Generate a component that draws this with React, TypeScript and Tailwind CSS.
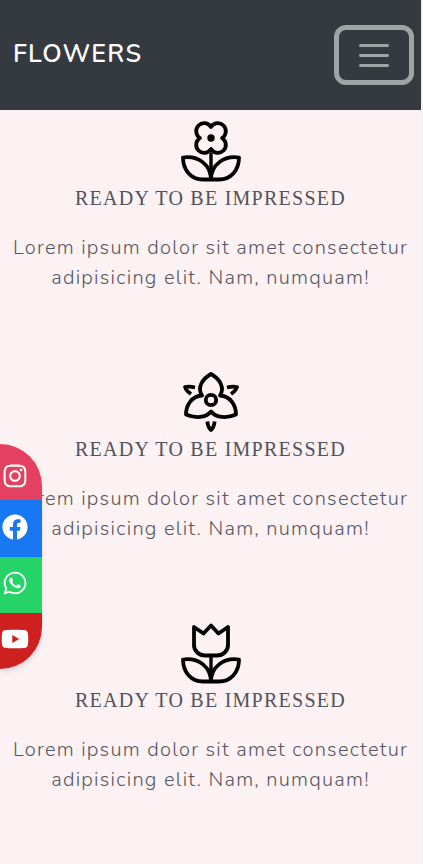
import type { ReactNode } from "react";
import { FaFacebook, FaInstagram, FaWhatsapp, FaYoutube } from "react-icons/fa";

function FlowerSvg({ children }: { children: ReactNode }) {
  return (
    <svg
      className="h-16 w-16"
      viewBox="0 0 64 64"
      fill="none"
      stroke="#000"
      strokeWidth="3.8"
      strokeLinecap="round"
      strokeLinejoin="round"
      aria-hidden="true"
    >
      {children}
    </svg>
  );
}

function Leaves() {
  return (
    <>
      <path d="M32 34V58" strokeWidth="3.4" />
      <path d="M32 59.500C32 45 19 35 4 37.500C4 50 12 59.500 24 59.500H40C52 59.500 60 50 60 37.500C45 35 32 45 32 59.500Z" />
      <path d="M30 49H34L33 58H31Z" fill="#000" strokeWidth="1" />
    </>
  );
}

function Blossom() {
  return (
    <FlowerSvg>
      <path d="M32 7A8 8 0 1 1 43 18A8 8 0 1 1 32 29A8 8 0 1 1 21 18A8 8 0 1 1 32 7Z" />
      <circle cx="32" cy="18" r="3.7" fill="#000" stroke="none" />
      <Leaves />
    </FlowerSvg>
  );
}

function Orchid() {
  return (
    <FlowerSvg>
      <path d="M23 24.500C18 17 23 8 32 3C41 8 46 17 41 24.500C51 25 57 34 57 43.500C48 47.500 37 47 32 40.500C27 47 16 47.500 7 43.500C7 34 13 25 23 24.500Z" />
      <circle cx="32" cy="29" r="5.200" />
      <path d="M16 16.500C12 15.500 9 15.500 6 16C7 19 9 21 12 23" strokeLinecap="butt" />
      <path d="M48 16.500C52 15.500 55 15.500 58 16C57 19 55 21 52 23" strokeLinecap="butt" />
      <path d="M28.300 50.500C29 55 30 57.500 32 59C34 57.500 35 55 35.700 50.500" strokeLinecap="butt" />
    </FlowerSvg>
  );
}

function Tulip() {
  return (
    <FlowerSvg>
      <path d="M15 5L24.500 11.500L32 3.500L39.500 11.500L49 5V23C49 29 44 33.500 38 33.500H26C20 33.500 15 29 15 23Z" />
      <Leaves />
    </FlowerSvg>
  );
}

function Feature({ icon }: { icon: ReactNode }) {
  return (
    <article className="flex flex-col items-center pb-[78px] text-center">
      {icon}
      <h2 className="font-['Liberation_Serif',serif] text-xl leading-7 tracking-[0.0625em] text-[#50535a]">
        READY TO BE IMPRESSED
      </h2>
      <p className="mt-[21px] text-xl leading-[30px] font-light tracking-[0.0625em] text-[#55585f]">
        Lorem ipsum dolor sit amet consectetur adipisicing elit. Nam, numquam!
      </p>
    </article>
  );
}

export default function App() {
  return (
    <div className="min-h-screen border-r-2 border-[#f1f1f4] bg-[#fcf1f3] font-[Nunito,'Open_Sans',sans-serif]">
      <header className="flex h-[110px] items-center justify-between bg-[#353a41] pr-[7px] pl-[13px]">
        <a
          href="#"
          className="pb-0.5 text-[25px] leading-8 font-semibold tracking-wider text-white"
        >
          FLOWERS
        </a>
        <button
          type="button"
          aria-label="Toggle navigation"
          className="flex h-[60px] w-20 flex-col items-center justify-center gap-[7px] rounded-xl border-5 border-[#a1a4a7]"
        >
          <span className="h-[3px] w-[30px] rounded-full bg-[#a1a4a7]" />
          <span className="h-[3px] w-[30px] rounded-full bg-[#a1a4a7]" />
          <span className="h-[3px] w-[30px] rounded-full bg-[#a1a4a7]" />
        </button>
      </header>

      <main className="pt-2.5 pr-2 pl-2">
        <Feature icon={<Blossom />} />
        <Feature icon={<Orchid />} />
        <Feature icon={<Tulip />} />
      </main>

      <nav
        aria-label="Social media"
        className="fixed top-[444px] left-0 flex w-[42px] flex-col overflow-hidden rounded-r-[42px] text-[26px] text-white shadow-md"
      >
        <a
          href="#"
          aria-label="Instagram"
          className="flex h-14 items-center justify-center bg-[#e4405f] pt-2 pr-3"
        >
          <FaInstagram />
        </a>
        <a
          href="#"
          aria-label="Facebook"
          className="flex h-[57px] items-center justify-center bg-[#1877f2] pr-3 pb-1"
        >
          <FaFacebook />
        </a>
        <a
          href="#"
          aria-label="WhatsApp"
          className="flex h-14 items-center justify-center bg-[#25d366] pr-3 pb-1"
        >
          <FaWhatsapp />
        </a>
        <a
          href="#"
          aria-label="YouTube"
          className="flex h-14 items-center justify-center bg-[#cd201f] pr-3 pb-1"
        >
          <FaYoutube className="text-[28px]" />
        </a>
      </nav>
    </div>
  );
}
